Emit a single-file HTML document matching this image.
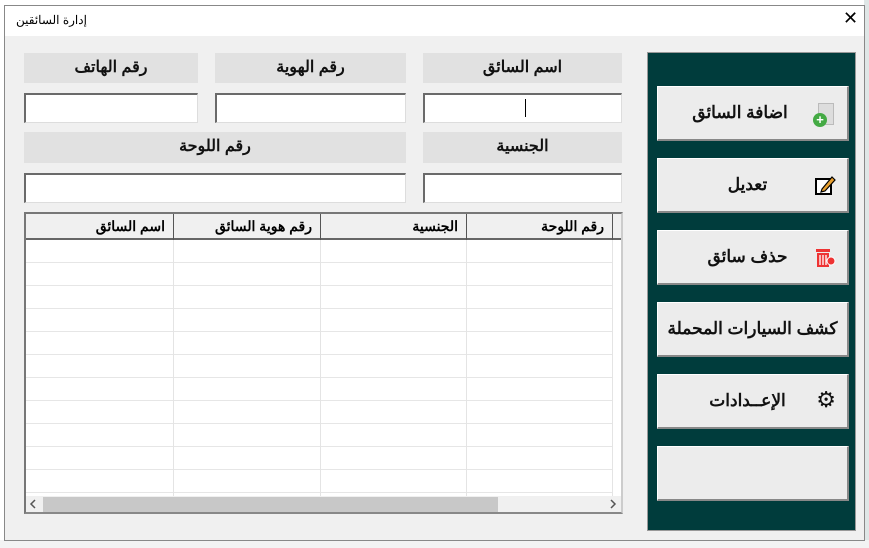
<!DOCTYPE html><html><head><meta charset="utf-8"><style>
body{margin:0;width:869px;height:548px;background:#fff;position:relative;overflow:hidden;font-family:"Liberation Sans","Noto Sans CJK SC",sans-serif}
.a{position:absolute;box-sizing:border-box}
.lab{background:#e1e1e1;font-weight:bold;font-size:16px;text-align:center;line-height:30px;color:#111}
.inp{background:#fff;border:1px solid #7a7a7a;border-right-color:#ddd;border-bottom-color:#ddd;border-top:2px solid #6a6a6a;border-left:2px solid #6a6a6a}
.btn{background:#ececec;border:1px solid #fff;border-right:2px solid #888;border-bottom:2px solid #888;font-weight:bold;font-size:17px;color:#111;display:flex;align-items:center;justify-content:center;direction:rtl}
.ic{position:absolute;left:154px;top:16px;width:24px;height:24px}
.th{font-weight:bold;font-size:14px;direction:rtl;text-align:right;padding-right:8px;line-height:24px;border-left:1px solid #555}
</style></head><body>
<div class="a" style="left:864px;top:0;width:5px;height:548px;background:#dfe6e6"></div>
<div class="a" style="left:0;top:540px;width:869px;height:8px;background:#f3f3f3"></div>
<div class="a" style="left:4px;top:5px;width:861px;height:536px;border:1px solid #888;background:#f0f0f0"></div>
<div class="a" style="left:5px;top:6px;width:859px;height:30px;background:#fff"></div>
<div class="a" style="left:16px;top:13px;font-size:12px;direction:rtl">إدارة السائقين</div>
<div class="a" style="left:843px;top:8px;font-size:18px">✕</div>

<div class="a lab" style="left:24px;top:53px;width:174px;height:30px">رقم الهاتف</div>
<div class="a lab" style="left:215px;top:53px;width:191px;height:30px">رقم الهوية</div>
<div class="a lab" style="left:423px;top:53px;width:199px;height:30px">اسم السائق</div>
<div class="a inp" style="left:24px;top:93px;width:174px;height:30px"></div>
<div class="a inp" style="left:215px;top:93px;width:191px;height:30px"></div>
<div class="a inp" style="left:423px;top:93px;width:199px;height:30px"><div class="a" style="left:100px;top:4px;width:1px;height:18px;background:#000"></div></div>
<div class="a lab" style="left:24px;top:132px;width:382px;height:31px">رقم اللوحة</div>
<div class="a lab" style="left:423px;top:132px;width:199px;height:31px">الجنسية</div>
<div class="a inp" style="left:24px;top:173px;width:382px;height:30px"></div>
<div class="a inp" style="left:423px;top:173px;width:199px;height:30px"></div>

<div class="a" style="left:24px;top:212px;width:599px;height:302px;border:2px solid #777;border-right-color:#ccc;border-bottom-color:#888;background:#fff;overflow:hidden">
<div class="a" style="left:0;top:0;width:595px;height:26px;background:#f0f0f0;border-bottom:2px solid #666"></div>
<div class="a th" style="left:0;top:0;width:147px;height:26px;border-left:none">اسم السائق</div>
<div class="a th" style="left:147px;top:0;width:147px;height:26px">رقم هوية السائق</div>
<div class="a th" style="left:294px;top:0;width:146px;height:26px">الجنسية</div>
<div class="a th" style="left:440px;top:0;width:146px;height:26px">رقم اللوحة</div>
<div class="a" style="left:586px;top:0;width:1px;height:26px;background:#555"></div>
<div class="a" style="left:0;top:26px;width:587px;height:256px;background:repeating-linear-gradient(#fff 0 22px,#e6e6e6 22px 23px)"></div>
<div class="a" style="left:147px;top:26px;width:1px;height:256px;background:#e4e4e4"></div>
<div class="a" style="left:294px;top:26px;width:1px;height:256px;background:#e4e4e4"></div>
<div class="a" style="left:440px;top:26px;width:1px;height:256px;background:#e4e4e4"></div>
<div class="a" style="left:586px;top:26px;width:1px;height:256px;background:#e4e4e4"></div>
<div class="a" style="left:0;top:282px;width:595px;height:17px;background:#f0f0f0"></div>
<div class="a" style="left:17px;top:283px;width:455px;height:15px;background:#c8c8c8"></div>
<svg class="a" style="left:3px;top:285px" width="8" height="10"><path d="M6 1 L2 5 L6 9" fill="none" stroke="#555" stroke-width="1.5"/></svg>
<svg class="a" style="left:583px;top:285px" width="8" height="10"><path d="M2 1 L6 5 L2 9" fill="none" stroke="#555" stroke-width="1.5"/></svg>
</div>

<div class="a" style="left:647px;top:52px;width:209px;height:479px;background:#003c3c;border:1px solid #999"></div>
<div class="a btn" style="left:657px;top:86px;width:192px;height:55px;padding-right:25px"><span class="ic"><span style="position:absolute;left:6px;top:0;width:14px;height:20px;background:#ddd;border:1px solid #bbb"></span><span style="position:absolute;left:1px;top:10px;width:14px;height:14px;border-radius:50%;background:#4a4;color:#fff;font-size:13px;line-height:14px;text-align:center">+</span></span>اضافة السائق</div>
<div class="a btn" style="left:657px;top:158px;width:192px;height:55px;padding-right:10px"><span class="ic" style="top:15px"><svg width="22" height="22"><rect x="2" y="5" width="15" height="15" fill="#fff" stroke="#000" stroke-width="2"/><path d="M8 15 L18 3 L21 6 L11 17 L7 18Z" fill="#e8a030" stroke="#000" stroke-width="1.2"/></svg></span>تعديل</div>
<div class="a btn" style="left:657px;top:230px;width:192px;height:55px;padding-right:10px"><span class="ic" style="top:15px"><svg width="22" height="22"><rect x="2" y="3" width="14" height="3" fill="#e33"/><rect x="3" y="7" width="12" height="14" fill="#e33"/><path d="M6 9v10M9 9v10M12 9v10" stroke="#fff" stroke-width="1.3"/><circle cx="17" cy="15" r="4" fill="#e33" stroke="#fff"/></svg></span>حذف سائق</div>
<div class="a btn" style="left:657px;top:302px;width:192px;height:55px">كشف السيارات المحملة</div>
<div class="a btn" style="left:657px;top:374px;width:192px;height:55px;padding-right:10px"><span class="ic" style="top:12px;font-size:22px;font-weight:normal">⚙</span>الإعــدادات</div>
<div class="a btn" style="left:657px;top:446px;width:192px;height:55px"></div>
</body></html>
